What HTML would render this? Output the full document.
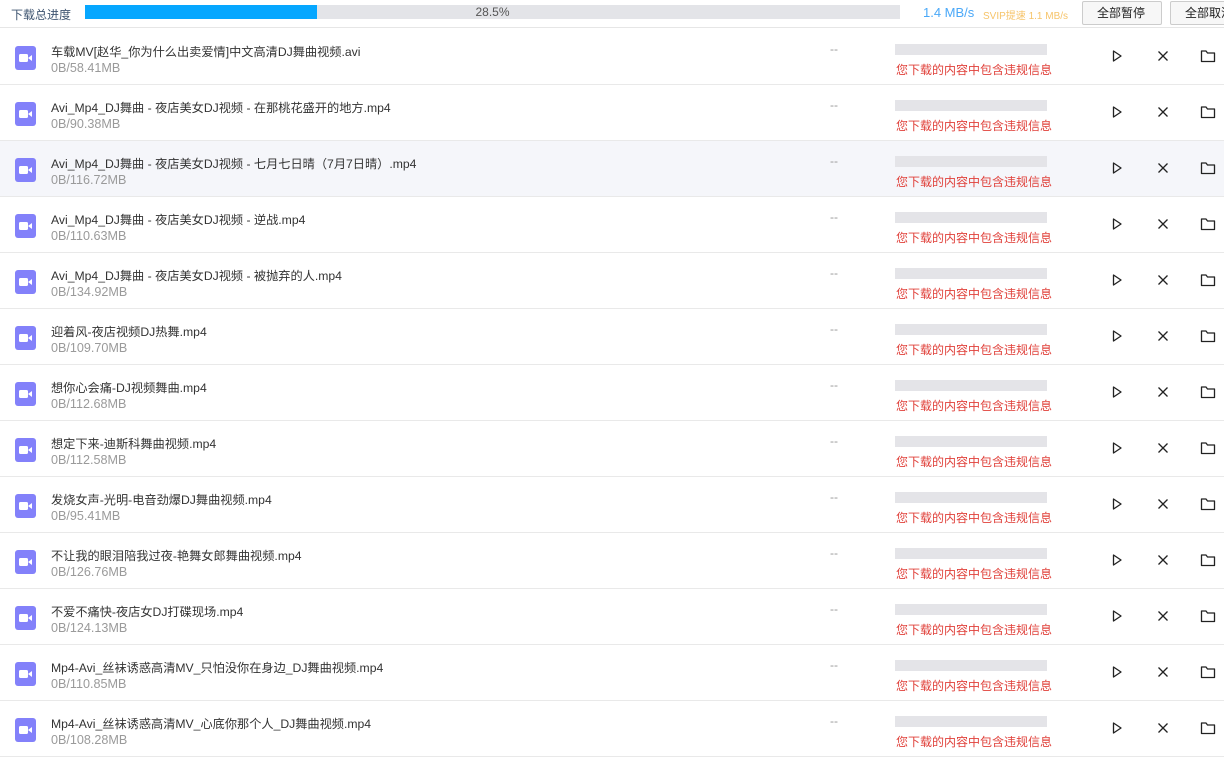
<!DOCTYPE html>
<html><head><meta charset="utf-8"><style>
*{margin:0;padding:0;box-sizing:border-box}
body{width:1224px;height:771px;overflow:hidden;background:#fff;font-family:"Liberation Sans","Noto Sans CJK SC",sans-serif;position:relative}
.hd{position:absolute;left:0;top:0;width:1224px;height:28px;border-bottom:1px solid #e6e6e6}
.t{position:absolute;left:11px;top:6px;font-size:12px;color:#3e5470}
.bar{position:absolute;left:85px;top:5px;width:815px;height:14px;background:#e3e4e8}
.bar i{position:absolute;left:0;top:0;width:232px;height:14px;background:#06a7ff}
.bar span{position:absolute;left:0;width:815px;text-align:center;top:0;font-size:12px;line-height:14px;color:#555}
.sp{position:absolute;left:923px;top:5px;font-size:13px;color:#4aa8f8}
.sv{position:absolute;left:983px;top:7px;font-size:10px;color:#f6c46a}
.btn{position:absolute;top:1px;height:24px;border:1px solid #ccc;border-radius:2px;background:#f7f7f7;font-size:12px;line-height:22px;color:#222;padding-left:14px}
.row{position:absolute;left:0;width:1224px;height:56px;border-bottom:1px solid #e9e9e9}
.row.h{background:#f5f6fa}
.ic{position:absolute;left:15px;top:17px;width:21px;height:24px;background:#8381fa;border-radius:3px}
.ic svg{position:absolute;left:4px;top:7px}
.n{position:absolute;left:51px;top:13px;font-size:12.2px;color:#333;white-space:nowrap}
.s{position:absolute;left:51px;top:32px;font-size:12.6px;color:#9a9a9a}
.d{position:absolute;left:830px;top:13px;font-size:12px;color:#999}
.g{position:absolute;left:895px;top:15px;width:152px;height:11px;background:#e4e4e8}
.r{position:absolute;left:896px;top:32px;font-size:12px;color:#e0403a}
.a{position:absolute;top:20px}
</style></head><body>
<div class="hd">
<div class="t">下载总进度</div>
<div class="bar"><i></i><span>28.5%</span></div>
<div class="sp">1.4 MB/s</div>
<div class="sv">SVIP提速 1.1 MB/s</div>
<div class="btn" style="left:1082px;width:80px">全部暂停</div>
<div class="btn" style="left:1170px;width:70px">全部取消</div>
</div>
<div id="list"></div>
<script>
var d=[["车载MV[赵华_你为什么出卖爱情]中文高清DJ舞曲视频.avi","58.41MB"],["Avi_Mp4_DJ舞曲 - 夜店美女DJ视频 - 在那桃花盛开的地方.mp4","90.38MB"],["Avi_Mp4_DJ舞曲 - 夜店美女DJ视频 - 七月七日晴（7月7日晴）.mp4","116.72MB"],["Avi_Mp4_DJ舞曲 - 夜店美女DJ视频 - 逆战.mp4","110.63MB"],["Avi_Mp4_DJ舞曲 - 夜店美女DJ视频 - 被抛弃的人.mp4","134.92MB"],["迎着风-夜店视频DJ热舞.mp4","109.70MB"],["想你心会痛-DJ视频舞曲.mp4","112.68MB"],["想定下来-迪斯科舞曲视频.mp4","112.58MB"],["发烧女声-光明-电音劲爆DJ舞曲视频.mp4","95.41MB"],["不让我的眼泪陪我过夜-艳舞女郎舞曲视频.mp4","126.76MB"],["不爱不痛快-夜店女DJ打碟现场.mp4","124.13MB"],["Mp4-Avi_丝袜诱惑高清MV_只怕没你在身边_DJ舞曲视频.mp4","110.85MB"],["Mp4-Avi_丝袜诱惑高清MV_心底你那个人_DJ舞曲视频.mp4","108.28MB"]];
var h='';
d.forEach(function(x,i){
h+='<div class="row'+(i==2?' h':'')+'" style="top:'+(29+i*56)+'px"><div class="ic"><svg width="13" height="10"><rect x="0" y="1" width="9" height="8" rx="1.5" fill="#fff"/><path d="M9 5 L13 2 L13 8 Z" fill="#fff"/></svg></div><div class="n">'+x[0]+'</div><div class="s">0B/'+x[1]+'</div><div class="d">--</div><div class="g"></div><div class="r">您下载的内容中包含违规信息</div>'+
'<svg class="a" style="left:1111px" width="12" height="14"><path d="M2.5 2 L10 7 L2.5 12 Z" fill="none" stroke="#222" stroke-width="1.3" stroke-linejoin="round"/></svg>'+
'<svg class="a" style="left:1156px" width="14" height="14"><path d="M2.5 2.5 L11.5 11.5 M11.5 2.5 L2.5 11.5" stroke="#222" stroke-width="1.3"/></svg>'+
'<svg class="a" style="left:1200px" width="16" height="14"><path d="M1.5 2 H6 L7.5 4 H14.5 V12.5 H1.5 Z" fill="none" stroke="#222" stroke-width="1.3" stroke-linejoin="round"/></svg></div>';
});
document.getElementById('list').innerHTML=h;
</script>
</body></html>
